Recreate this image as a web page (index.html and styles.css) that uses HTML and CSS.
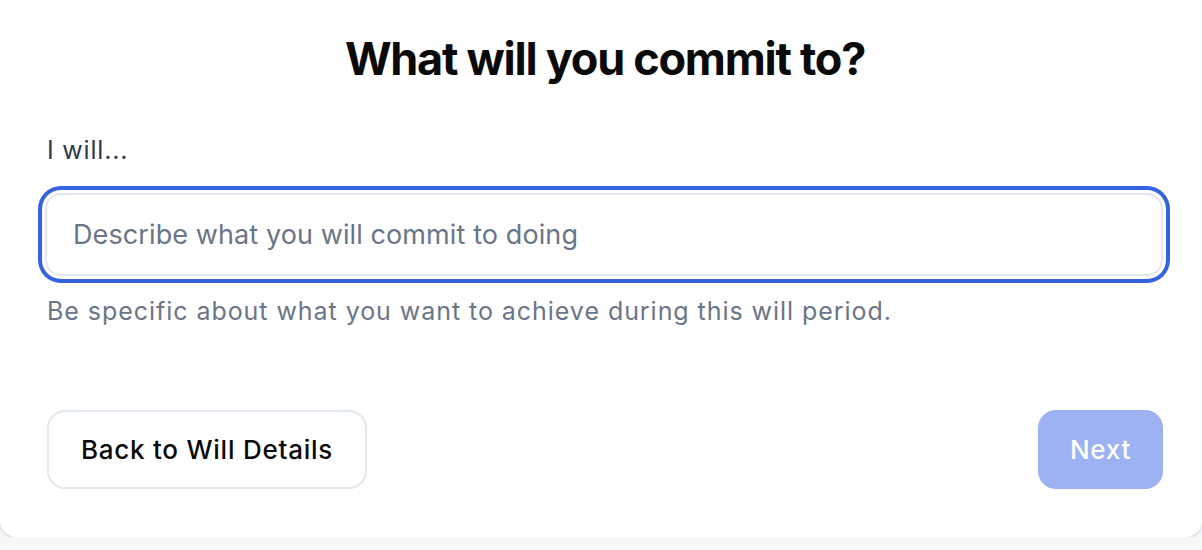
FILE: index.html
```html
<!DOCTYPE html>
<html lang="en">
<head>
<meta charset="utf-8">
<title>What will you commit to?</title>
<link rel="stylesheet" href="styles.css">
</head>
<body>
  <div class="card">
    <h1 class="title">What will you commit to?</h1>
    <label class="label" for="commit">I will...</label>
    <input id="commit" class="input" type="text" placeholder="Describe what you will commit to doing">
    <p class="help">Be specific about what you want to achieve during this will period.</p>
    <div class="actions">
      <button class="btn btn-back" type="button">Back to Will Details</button>
      <button class="btn btn-next" type="button" disabled>Next</button>
    </div>
  </div>
</body>
</html>
```

FILE: styles.css
```css
* { box-sizing: border-box; }
html, body {
  margin: 0;
  padding: 0;
  background: #f6f7f9;
  font-family: Inter, "Noto Sans", "Liberation Sans", sans-serif;
}
.card {
  background: #ffffff;
  height: 537px;
  border-radius: 0 0 16px 16px;
  box-shadow: 0 1px 3px rgba(15, 23, 42, 0.12), 0 1px 2px rgba(15, 23, 42, 0.06);
  padding: 32px 39px 48px 45px;
  display: flex;
  flex-direction: column;
}
.title {
  margin: 0;
  text-align: center;
  font-size: 45px;
  line-height: 54px;
  font-weight: 700;
  letter-spacing: -0.028em;
  color: #0a0a0a;
  padding-left: 2px;
}
.label {
  margin-top: 46px;
  font-size: 25px;
  line-height: 36px;
  font-weight: 400;
  letter-spacing: 0.8px;
  color: #2f3a4b;
  padding-left: 2px;
}
.input {
  margin-top: 25px;
  width: 1118px;
  height: 83px;
  border: 2px solid #e2e8f0;
  border-radius: 16px;
  padding: 0 26px;
  font-family: inherit;
  font-size: 27px;
  letter-spacing: 0.1px;
  color: #111827;
  outline: none;
  box-shadow: 0 0 0 3px #ffffff, 0 0 0 7px #3562e0;
}
.input::placeholder { color: #6b7588; }
.help {
  margin: 17px 0 0;
  padding-left: 2px;
  font-size: 25px;
  line-height: 36px;
  letter-spacing: 0.95px;
  color: #6b7588;
}
.actions {
  margin-top: auto;
  display: flex;
  justify-content: space-between;
  width: 1118px;
  padding-left: 2px;
}
.btn {
  height: 79px;
  border-radius: 18px;
  font-family: inherit;
  font-size: 26px;
  font-weight: 500;
  letter-spacing: 0.75px;
  padding: 0;
}
.btn-back {
  background: #ffffff;
  border: 2px solid #e2e8f0;
  color: #0a0a0a;
  width: 320px;
}
.btn-next {
  background: #9cb2f2;
  border: none;
  color: #ffffff;
  width: 125px;
}
```
